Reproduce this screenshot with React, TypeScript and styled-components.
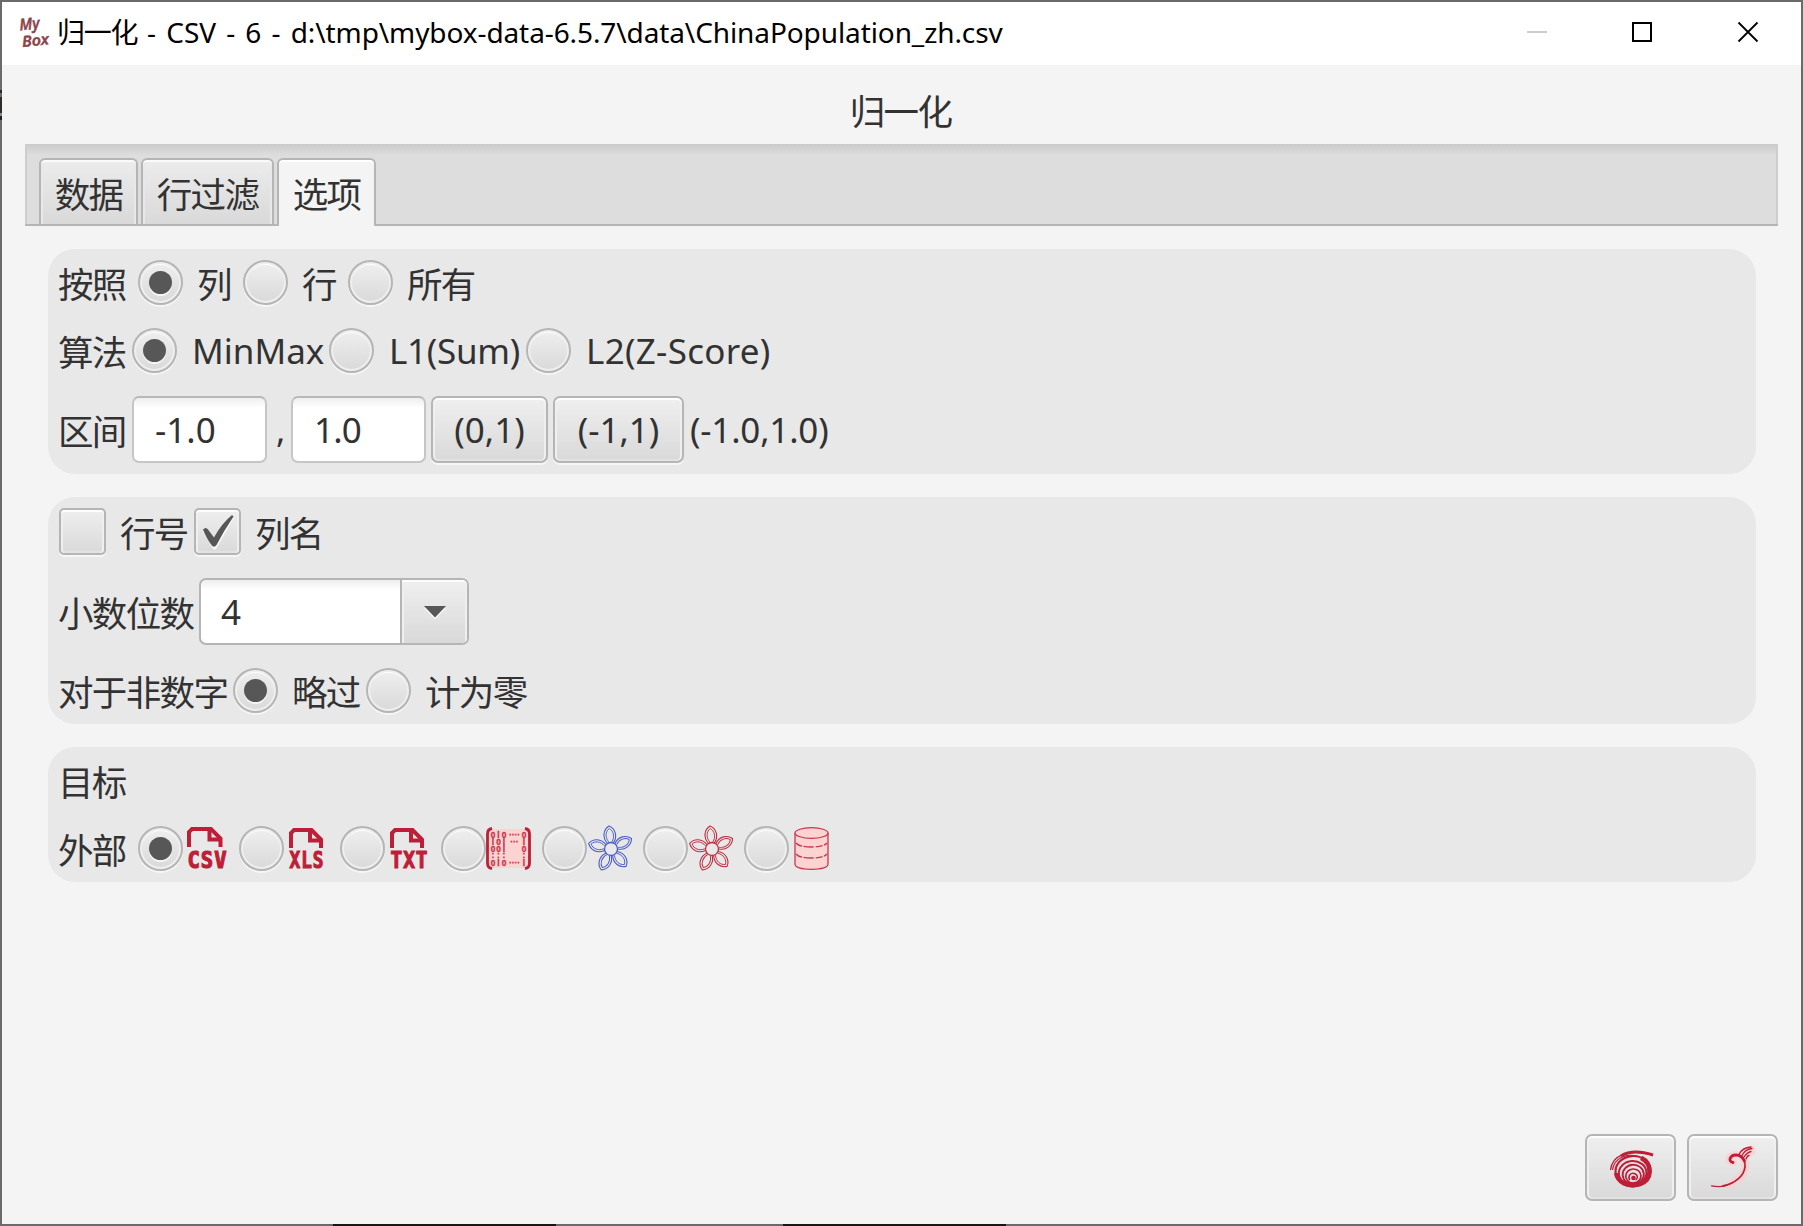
import React from "react";
import styled, { createGlobalStyle, css } from "styled-components";

const GlobalStyle = createGlobalStyle`
  * { box-sizing: border-box; }
  html, body { margin: 0; padding: 0; overflow: hidden; }
  body {
    font-family: "Noto Sans", "Noto Sans CJK SC", sans-serif;
    color: #323232;
  }
  svg { overflow: visible; }
`;

const RED = "#be1e37";

const Desktop = styled.div`
  width: 1803px;
  height: 1226px;
  padding: 2px;
  display: flex;
  background:
    linear-gradient(#161616, #161616) 333px 100% / 223px 2px no-repeat,
    linear-gradient(#161616, #161616) 783px 100% / 223px 2px no-repeat,
    linear-gradient(#2a2a2a 3px, #6b6a6b 3px, #6b6a6b 7px, #2f2b28 7px, #2f2b28 23px, #8a8a8a 23px, #8a8a8a 26px, #222 26px) 0 90px / 2px 30px no-repeat,
    #6b6a6b;
`;

const Window = styled.div`
  flex: 1;
  display: flex;
  flex-direction: column;
  background: #f4f4f4;
`;

const TitleBar = styled.header`
  height: 63px;
  flex: none;
  display: flex;
  align-items: flex-start;
  background: #fff;
  color: #000;
  padding-left: 18px;
`;

const LogoBox = styled.div`
  height: 62px;
  display: flex;
  align-items: center;
`;

const TitleText = styled.div`
  flex: 1;
  display: flex;
  align-items: baseline;
  margin: 9px 0 0 6px;
  line-height: 40px;
  white-space: pre;
`;

const TitleCjk = styled.span`
  font-family: "Noto Sans CJK SC", sans-serif;
  font-size: 28px;
  letter-spacing: -1.3px;
`;

const TitleLatin = styled.span`
  font-size: 28px;
  margin-left: 10px;
  word-spacing: 3.1px;
  letter-spacing: -0.1px;
`;

const WindowControls = styled.div`
  display: flex;
`;

const ControlCell = styled.div`
  width: 106px;
  height: 60px;
  display: flex;
  align-items: center;
  justify-content: center;
`;

const Body = styled.main`
  flex: 1;
  display: flex;
  flex-direction: column;
  padding: 0 23px 23px;
`;

const Cjk = styled.span`
  font-family: "Noto Sans CJK SC", sans-serif;
  font-size: 35.5px;
  letter-spacing: -1.65px;
  line-height: 44px;
  white-space: nowrap;
`;

const Latin = styled.span<{ $track?: number }>`
  font-size: 35px;
  line-height: 44px;
  letter-spacing: ${(p) => p.$track ?? 0}px;
  white-space: pre;
`;

const Heading = styled.div`
  height: 79px;
  display: flex;
  justify-content: center;
  align-items: center;
  padding: 10px 2px 0 0;
`;

const TabHeader = styled.div`
  height: 82px;
  flex: none;
  display: flex;
  align-items: flex-end;
  gap: 3px;
  padding-left: 14px;
  background:
    linear-gradient(#b5b5b5, #b5b5b5) 0 100% / 100% 2px no-repeat,
    linear-gradient(90deg, #cdcdcd 2px, transparent 2px, transparent calc(100% - 2px), #cdcdcd calc(100% - 2px)),
    linear-gradient(#cacaca, #dddddd 11px, #dddddd);
`;

const Tab = styled.div<{ $active?: boolean; $width: number }>`
  width: ${(p) => p.$width}px;
  height: 68px;
  display: flex;
  justify-content: center;
  align-items: center;
  padding-top: 1px;
  border: 2px solid #b5b5b5;
  border-radius: 6px 6px 0 0;
  ${(p) =>
    p.$active
      ? css`
          border-bottom: 0;
          padding-bottom: 1px;
          background: #f4f4f4;
          box-shadow: inset 0 2px 0 #fff;
        `
      : css`
          background: linear-gradient(#ececec, #d9d9d9);
          box-shadow: inset 0 2px 0 #fafafa, inset 2px 0 0 #e8e8e8, inset -2px 0 0 #e8e8e8;
        `}
`;

const Content = styled.div`
  flex: 1;
  display: flex;
  flex-direction: column;
  gap: 23px;
  padding: 23px 22px 0 23px;
`;

const Group = styled.section<{ $height: number }>`
  height: ${(p) => p.$height}px;
  display: flex;
  flex-direction: column;
  padding: 11px 11px 11px 10px;
  border-radius: 27px;
  background: #e8e8e8;
`;

const Row = styled.div<{ $height: number; $top?: number }>`
  height: ${(p) => p.$height}px;
  margin-top: ${(p) => p.$top ?? 0}px;
  display: flex;
  align-items: center;
`;

const Label = styled(Cjk)<{ $width: number }>`
  width: ${(p) => p.$width}px;
  flex: none;
`;

const Choice = styled.label<{ $width: number }>`
  width: ${(p) => p.$width}px;
  flex: none;
  display: flex;
  align-items: center;
`;

const CheckChoice = styled(Choice)<{ $first?: boolean }>`
  padding-left: ${(p) => (p.$first ? 1 : 0)}px;
`;

const ChoiceCjk = styled(Cjk)`
  margin-left: 14px;
`;

const ChoiceLatin = styled(Latin)`
  margin-left: 15px;
`;

const raised = css`
  border: 2px solid #b5b5b5;
  background: linear-gradient(#efefef, #d9d9d9);
  box-shadow: 0 2px 0 #f6f6f6, inset 0 2px 0 #fdfdfd, inset 2px 0 0 #efefef, inset -2px 0 0 #efefef, inset 0 -2px 0 #e2e2e2;
`;

const RadioCircle = styled.span`
  ${raised}
  width: 45px;
  height: 45px;
  flex: none;
  display: flex;
  align-items: center;
  justify-content: center;
  border-radius: 50%;
  box-shadow: 0 2px 0 #f6f6f6, inset 0 0 0 2px #eeeeee, inset 0 2px 0 1px #fdfdfd;
`;

const RadioDot = styled.span`
  width: 23px;
  height: 23px;
  border-radius: 50%;
  background: #575757;
  box-shadow: 0 2px 0 #f4f4f4;
`;

const CheckBox = styled.span`
  ${raised}
  width: 47px;
  height: 47px;
  flex: none;
  border-radius: 5px;
  svg { display: block; }
`;

const Field = styled.div`
  width: 135px;
  height: 67px;
  flex: none;
  display: flex;
  align-items: center;
  padding-left: 21px;
  border: 2px solid #c6c6c6;
  border-top-color: #b8b8b8;
  border-radius: 7px;
  background: linear-gradient(#eeeeee, #ffffff 10px);
`;

const Button = styled.button<{ $width: number; $left?: number }>`
  ${raised}
  width: ${(p) => p.$width}px;
  height: 67px;
  flex: none;
  margin: 0 0 0 ${(p) => p.$left ?? 0}px;
  padding: 0;
  display: flex;
  align-items: center;
  justify-content: center;
  border-radius: 7px;
  font-family: inherit;
  color: inherit;
`;

const Comma = styled(Latin)`
  width: 24px;
  flex: none;
  padding-left: 9px;
`;

const RangeText = styled(Latin)`
  margin-left: 6px;
`;

const Combo = styled.div`
  width: 270px;
  height: 67px;
  display: flex;
  border: 2px solid #b5b5b5;
  border-radius: 7px;
  overflow: hidden;
  background: linear-gradient(#eeeeee, #ffffff 10px);
`;

const ComboValue = styled.div`
  flex: 1;
  display: flex;
  align-items: center;
  padding-left: 20px;
`;

const ComboArrow = styled.div`
  width: 67px;
  display: flex;
  align-items: center;
  justify-content: center;
  border-left: 2px solid #b5b5b5;
  background: linear-gradient(#efefef, #d9d9d9);
  box-shadow: inset 0 2px 0 #fdfdfd, inset 2px 0 0 #efefef, inset -2px 0 0 #efefef;
`;

const FormatChoice = styled.label`
  width: 101px;
  flex: none;
  display: flex;
  align-items: center;
`;

const Footer = styled.footer`
  flex: none;
  display: flex;
  justify-content: flex-end;
  gap: 11px;
`;

function Logo() {
  return (
    <LogoBox>
      <svg width="31" height="34" viewBox="0 0 31 34" fill="#8c4248" stroke="#8c4248" strokeWidth="0.5" fontFamily="Open Sans, sans-serif" fontWeight="600" fontStyle="italic">
        <text x="0" y="14.5" fontSize="16" textLength="20" lengthAdjust="spacingAndGlyphs" transform="rotate(-6 0 14.5)">My</text>
        <text x="2.5" y="31" fontSize="15" textLength="27" lengthAdjust="spacingAndGlyphs" transform="rotate(-6 2.5 31)">Box</text>
      </svg>
    </LogoBox>
  );
}

function Radio({ on }: { on?: boolean }) {
  return <RadioCircle>{on && <RadioDot />}</RadioCircle>;
}

function FileIcon({ name, x, width, top }: { name: string; x: number; width: number; top: number }) {
  const right = x + 35 - (top - 1) * 1.5;
  const pitch = width / 3;
  return (
    <svg width="48" height="45" viewBox="0 0 48 45">
      <path
        d={`M${x + 2} ${top + 20}V${top + 5}L${x + 5} ${top + 2}H${right - 11}L${right - 1.5} ${top + 11.5}V${top + 20}`}
        fill="none"
        stroke={RED}
        strokeWidth="4"
      />
      <path d={`M${right - 12.5} ${top + 2}V${top + 12.5}H${right - 1}`} fill="none" stroke={RED} strokeWidth="4" />
      <g
        fontFamily="DejaVu Sans Mono, monospace"
        fontWeight="700"
        fontSize="22.5"
        fill={RED}
        stroke={RED}
        strokeWidth="1.2"
      >
        {name.split("").map((letter, i) => (
          <text key={i} x={x + 0.5 + i * pitch} y="42.3" textLength={pitch - 1} lengthAdjust="spacingAndGlyphs">
            {letter}
          </text>
        ))}
      </g>
    </svg>
  );
}

function MatrixIcon() {
  const rows: [number, string[]][] = [
    [11.5, ["0", "l", "0", "····", "0"]],
    [18.5, ["l", "0", "l", "···", "l"]],
    [26, ["0", "0", "l", "", "0"]],
    [32, [":", ":", ":", "", ":"]],
    [40, ["0", "l", "0", "····", "l"]],
  ];
  const xs = [7, 12.5, 18, 28.5, 38];
  return (
    <svg width="45" height="45" viewBox="0 0 45 45">
      <rect x="3" y="3" width="39" height="39" rx="3" fill="#fbd3d0" />
      <path d="M6 2.5Q1.5 3 1.5 8V37Q1.5 42 6 42.5M39 2.5Q43.5 3 43.5 8V37Q43.5 42 39 42.5" fill="none" stroke={RED} strokeWidth="2.8" />
      <g fill="#c8304a" stroke="#c8304a" strokeWidth="0.3" fontFamily="Liberation Sans, sans-serif" fontSize="8.3" fontWeight="700" textAnchor="middle">
        {rows.map(([y, cells]) => cells.map((c, i) => <text key={`${y}-${i}`} x={xs[i]} y={y}>{c}</text>))}
      </g>
    </svg>
  );
}

const PETALS = [-5, 63, 139, 205, 284];

function FlowerIcon({ color }: { color: string }) {
  return (
    <svg width="45" height="45" viewBox="0 0 45 45" fill="none" stroke={color}>
      {PETALS.map((angle) => (
        <g key={angle} transform={`translate(24 23) rotate(${angle})`}>
          <path d="M-3 -6C-8 -12 -6 -20 0 -23C6 -20 8 -12 3 -6" strokeWidth="1.1" />
          <path d="M-1.5 -7C-5.2 -12 -4 -18 0 -20.5C4 -18 5.2 -12 1.5 -7" strokeWidth="0.9" />
        </g>
      ))}
      <circle cx="24" cy="23" r="6.5" strokeWidth="1.3" />
    </svg>
  );
}

function DatabaseIcon() {
  return (
    <svg width="45" height="45" viewBox="0 0 45 45" fill="none" stroke="#c8384e" strokeWidth="1.3">
      <path d="M6 7V38.5C7 45 38 45 39 38.5V7" fill="#fbd3d0" />
      <ellipse cx="22.5" cy="7" rx="16.5" ry="5.3" fill="#fbd3d0" />
      <path d="M7 17Q10 21 22.5 21Q35 21 38 17M7 28Q10 32 22.5 32Q35 32 38 28" strokeDasharray="7 1.5 10 2" />
    </svg>
  );
}

function SpiralIcon() {
  return (
    <svg width="45" height="45" viewBox="0 0 45 45" fill="none" stroke={RED}>
      <path d="M2.5 25C4 11 19 3 45 10" strokeWidth="1.3" />
      <path d="M13 11C21 6 32 6 45 10" strokeWidth="3" />
      <path d="M4.5 25C6 13 18 8 30 11.5" strokeWidth="1.2" />
      <g transform="rotate(-4 25 26)">
        <ellipse cx="25" cy="26" rx="17.5" ry="15" strokeWidth="2.2" />
        <path d="M34 13.5C45 20 44 36 31 39.5C18 42 9 36 8 27" strokeWidth="4.6" />
        <ellipse cx="24.5" cy="28" rx="13.8" ry="12" strokeWidth="2" />
        <ellipse cx="25" cy="29.5" rx="10.6" ry="9.7" strokeWidth="1.9" />
        <ellipse cx="25" cy="31" rx="7.6" ry="7" strokeWidth="1.7" />
        <path d="M21 35C19 30 23 27.5 26 28.5C30 30 29.5 34 27 35" strokeWidth="1.5" />
        <path d="M13 36C20 42 30 42 37 36" strokeWidth="4" />
      </g>
      <circle cx="25.5" cy="33" r="2.3" fill={RED} stroke="none" />
    </svg>
  );
}

function FeatherIcon() {
  return (
    <svg width="52" height="48" viewBox="0 0 52 48" fill="none" stroke={RED} strokeLinecap="round">
      <g stroke="#f9d2d1" opacity="0.8">
        <path d="M26 18C20 18 22 11 29 11C37 11 40 18 38 25C36 33 29 38 22 41" strokeWidth="8" />
        <path d="M34 9L45 4M37 13L46 8" strokeWidth="5" />
      </g>
      <path d="M4.500 41.8C12 43.5 20 42 26 38.5" strokeWidth="1.2" />
      <path d="M16 42C28 39.5 37 32 38 23C38.5 18 36 14 33 12.5" strokeWidth="1.8" />
      <path d="M26 18.5C20.5 17.5 23 11 29 11C33 11 36 13.5 37.500 17" strokeWidth="2.800" />
      <path d="M32 10.5C34 6 38 3.500 44 3M35 11.5C37 7.500 41 5 45 4.500M37 13C39 10 42 8 44 7.500M39 15C40 12.500 41 11.500 42 11.500" strokeWidth="1.300" />
    </svg>
  );
}

export default function App() {
  return (
    <>
      <GlobalStyle />
      <Desktop>
        <Window>
          <TitleBar>
            <Logo />
            <TitleText>
              <TitleCjk>归一化</TitleCjk>
              <TitleLatin>- CSV - 6 - d:\tmp\mybox-data-6.5.7\data\ChinaPopulation_zh.csv</TitleLatin>
            </TitleText>
            <WindowControls>
              <ControlCell>
                <svg width="20" height="20"><path d="M1 10H21" stroke="#ccc" strokeWidth="2" /></svg>
              </ControlCell>
              <ControlCell>
                <svg width="20" height="20"><rect x="1" y="1" width="18" height="18" fill="none" stroke="#000" strokeWidth="2" /></svg>
              </ControlCell>
              <ControlCell>
                <svg width="20" height="20"><path d="M0.5 0.5L19.5 19.5M19.5 0.5L0.5 19.5" stroke="#000" strokeWidth="1.8" /></svg>
              </ControlCell>
            </WindowControls>
          </TitleBar>
          <Body>
            <Heading><Cjk>归一化</Cjk></Heading>
            <TabHeader>
              <Tab $width={99}><Cjk>数据</Cjk></Tab>
              <Tab $width={133}><Cjk>行过滤</Cjk></Tab>
              <Tab $width={99} $active><Cjk>选项</Cjk></Tab>
            </TabHeader>
            <Content>
              <Group $height={225}>
                <Row $height={45}>
                  <Label $width={80}>按照</Label>
                  <Choice $width={105}><Radio on /><ChoiceCjk>列</ChoiceCjk></Choice>
                  <Choice $width={105}><Radio /><ChoiceCjk>行</ChoiceCjk></Choice>
                  <Choice $width={130}><Radio /><ChoiceCjk>所有</ChoiceCjk></Choice>
                </Row>
                <Row $height={45} $top={23}>
                  <Label $width={74}>算法</Label>
                  <Choice $width={197}><Radio on /><ChoiceLatin>MinMax</ChoiceLatin></Choice>
                  <Choice $width={197}><Radio /><ChoiceLatin $track={-0.3}>L1(Sum)</ChoiceLatin></Choice>
                  <Choice $width={260}><Radio /><ChoiceLatin $track={0.3}>L2(Z-Score)</ChoiceLatin></Choice>
                </Row>
                <Row $height={67} $top={23}>
                  <Label $width={74}>区间</Label>
                  <Field><Latin>-1.0</Latin></Field>
                  <Comma>,</Comma>
                  <Field><Latin $track={-0.8}>1.0</Latin></Field>
                  <Button $width={117} $left={5}><Latin>(0,1)</Latin></Button>
                  <Button $width={131} $left={5}><Latin>(-1,1)</Latin></Button>
                  <RangeText $track={-0.2}>(-1.0,1.0)</RangeText>
                </Row>
              </Group>
              <Group $height={227}>
                <Row $height={47}>
                  <CheckChoice $width={136} $first><CheckBox /><ChoiceCjk>行号</ChoiceCjk></CheckChoice>
                  <CheckChoice $width={135}>
                    <CheckBox>
                      <svg width="43" height="43" viewBox="0 0 43 43">
                        <path d="M7 20L10.5 18L18 28L36 6L37.5 7L20 37.5Q18 39 16.5 37Z" fill="#f8f8f8" transform="translate(0 1.5)" />
                        <path d="M7 19.5Q10 16.5 12 19.5L18 27.5Q26 13 36 5L37.5 6.5Q28 20.5 20.5 35Q18 38.5 15.5 35Q11 29.5 7 19.5Z" fill="#575757" />
                      </svg>
                    </CheckBox>
                    <ChoiceCjk>列名</ChoiceCjk>
                  </CheckChoice>
                </Row>
                <Row $height={67} $top={23}>
                  <Label $width={141}>小数位数</Label>
                  <Combo>
                    <ComboValue><Latin>4</Latin></ComboValue>
                    <ComboArrow>
                      <svg width="24" height="16">
                        <path d="M1 4H23L12 15.5Z" fill="#f8f8f8" />
                        <path d="M1 2H23L12 13.5Z" fill="#575757" />
                      </svg>
                    </ComboArrow>
                  </Combo>
                </Row>
                <Row $height={45} $top={23}>
                  <Label $width={175}>对于非数字</Label>
                  <Choice $width={133}><Radio on /><ChoiceCjk>略过</ChoiceCjk></Choice>
                  <Choice $width={180}><Radio /><ChoiceCjk>计为零</ChoiceCjk></Choice>
                </Row>
              </Group>
              <Group $height={135}>
                <Row $height={45}><Label $width={80}>目标</Label></Row>
                <Row $height={45} $top={23}>
                  <Label $width={80}>外部</Label>
                  <FormatChoice><Radio on /><FileIcon name="CSV" x={4} width={40} top={1} /></FormatChoice>
                  <FormatChoice><Radio /><FileIcon name="XLS" x={5} width={35} top={2} /></FormatChoice>
                  <FormatChoice><Radio /><FileIcon name="TXT" x={5} width={38} top={2} /></FormatChoice>
                  <FormatChoice><Radio /><MatrixIcon /></FormatChoice>
                  <FormatChoice><Radio /><FlowerIcon color="#4a5cc4" /></FormatChoice>
                  <FormatChoice><Radio /><FlowerIcon color="#c02c40" /></FormatChoice>
                  <FormatChoice><Radio /><DatabaseIcon /></FormatChoice>
                </Row>
              </Group>
            </Content>
            <Footer>
              <Button $width={91}><SpiralIcon /></Button>
              <Button $width={91}><FeatherIcon /></Button>
            </Footer>
          </Body>
        </Window>
      </Desktop>
    </>
  );
}
